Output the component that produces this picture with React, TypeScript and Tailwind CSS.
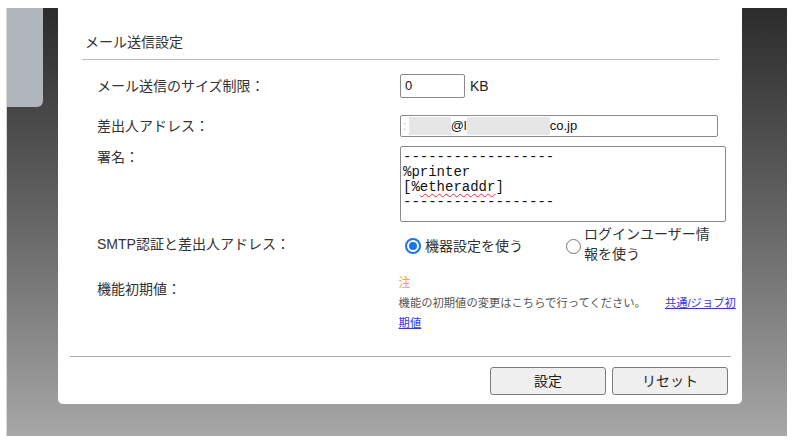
import React from "react";

function Radio({ checked }: { checked: boolean }) {
  return checked ? (
    <div className="flex h-[16px] w-[16px] shrink-0 items-center justify-center rounded-full border-2 border-[#1b74e4] bg-white">
      <div className="h-[8px] w-[8px] rounded-full bg-[#1b74e4]" />
    </div>
  ) : (
    <div className="h-[15px] w-[15px] shrink-0 rounded-full border border-[#767676] bg-white" />
  );
}

export default function App() {
  return (
    <div className="h-[441px] w-[800px] overflow-hidden bg-white pl-[6px] pt-[8px] font-['Liberation_Sans','Noto_Sans_CJK_JP',sans-serif] text-[#333]">
      <div className="flex h-[428px] w-[781px] border-l border-[#d8d8d8] bg-linear-to-b from-[#2c2c2c] to-[#a7a7a7]">
        <div className="w-[51px] shrink-0">
          <div className="h-[99px] w-[36px] rounded-br-[6px] bg-[#b1b6bc]" />
        </div>
        <div className="flex h-[396px] w-[684px] shrink-0 flex-col rounded-b-[5px] bg-white">
          <div className="pl-[27px] pt-[24px] text-[14px] leading-[20px]">メール送信設定</div>
          <div className="ml-[24px] mt-[7px] h-px w-[637px] bg-[#bdbdbd]" />

          <div className="pl-[39px]">
            <div className="mt-[14px] flex h-[24px] items-center">
              <div className="w-[303px] text-[14px]">メール送信のサイズ制限：</div>
              <div className="flex h-[24px] w-[65px] items-center rounded-[2px] border border-[#8a8a8a] pl-[4px] text-[13px] text-[#111]">0</div>
              <div className="ml-[5px] text-[14px] text-[#222]">KB</div>
            </div>

            <div className="mt-[17px] flex h-[22px] items-center">
              <div className="w-[303px] text-[14px]">差出人アドレス：</div>
              <div className="flex h-[22px] w-[318px] items-center rounded-[2px] border border-[#8a8a8a] pl-[2px] text-[13px] text-[#111]">
                <span className="text-[#bbb]">:</span>
                <span className="ml-[2px] h-[18px] w-[42px] bg-[#e6e6e6]" />
                <span>@l</span>
                <span className="h-[18px] w-[83px] bg-[#e6e6e6]" />
                <span>co.jp</span>
              </div>
            </div>

            <div className="mt-[9px] flex items-start">
              <div className="mt-px w-[303px] text-[14px] leading-[20px]">署名：</div>
              <div className="h-[76px] w-[326px] rounded-[2px] border border-[#8a8a8a] pl-[2px] pt-[3px] font-['Liberation_Mono','DejaVu_Sans_Mono',monospace] text-[14px] leading-[15px] text-[#111]">
                <div>------------------</div>
                <div>%printer</div>
                <div>
                  [%<span className="underline decoration-[#e03030] decoration-wavy decoration-1 underline-offset-2">etheraddr</span>]
                </div>
                <div>------------------</div>
              </div>
            </div>

            <div className="mt-[2px] flex h-[40px] items-center">
              <div className="w-[303px] text-[14px]">SMTP認証と差出人アドレス：</div>
              <div className="flex w-[166px] items-center pt-[4px]">
                <div className="ml-[5px]">
                  <Radio checked />
                </div>
                <span className="ml-[4px] text-[14px] leading-[20px]">機器設定を使う</span>
              </div>
              <div className="flex items-center">
                <div className="pt-[4px]">
                  <Radio checked={false} />
                </div>
                <span className="ml-[3px] text-[14px] leading-[20px]">
                  ログインユーザー情
                  <br />
                  報を使う
                </span>
              </div>
            </div>

            <div className="mt-[9px] flex items-start">
              <div className="mt-[6px] w-[303px] text-[14px] leading-[20px]">機能初期値：</div>
              <div className="w-[345px] text-[11.3px] leading-[20px]">
                <div className="text-[12px] text-[#f0a23a]">注</div>
                <div className="text-[#555]">
                  機能の初期値の変更はこちらで行ってください。
                  <span className="ml-[19px] text-[#3434ee] underline">
                    共通/ジョブ初
                    <br />
                    期値
                  </span>
                </div>
              </div>
            </div>
          </div>

          <div className="ml-[12px] mt-[23px] h-px w-[661px] bg-[#aaaaaa]" />

          <div className="mt-[10px] flex justify-end gap-[6px] pr-[14px]">
            <div className="flex h-[28px] w-[116px] items-center justify-center rounded-[3px] border border-[#7a7a7a] bg-[#efefef] text-[14px] text-[#222]">設定</div>
            <div className="flex h-[28px] w-[116px] items-center justify-center rounded-[3px] border border-[#7a7a7a] bg-[#efefef] text-[14px] text-[#222]">リセット</div>
          </div>
        </div>
      </div>
    </div>
  );
}
